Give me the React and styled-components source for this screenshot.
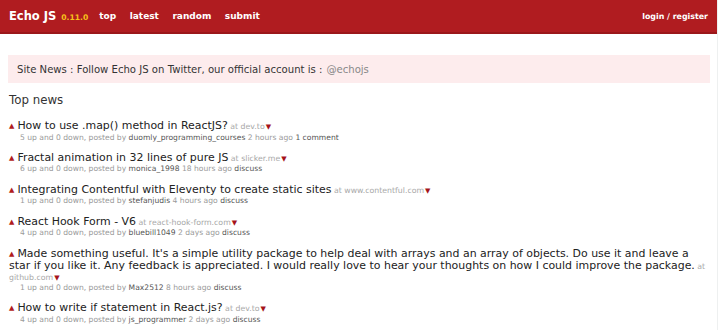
import React from "react";
import styled, { createGlobalStyle } from "styled-components";

const Global = createGlobalStyle`
  html, body { margin: 0; padding: 0; background: #fff; }
  body { font-family: "DejaVu Sans", Verdana, sans-serif; color: #333; }
  a { text-decoration: none; }
`;

const Page = styled.div`
  width: 718px;
  min-height: 330px;
  border-right: 1px solid #eef0f0;
  box-sizing: border-box;
`;

const Header = styled.header`
  height: 32px;
  background: #b01c20;
  border-bottom: 2px solid #9b171a;
  display: flex;
  align-items: center;
  padding: 0 9px 0 9px;
  color: #fff;
`;

const Logo = styled.a`
  font-size: 11.5px;
  font-weight: bold;
  color: #fff;
  margin-right: 5px;
`;

const Version = styled.span`
  font-size: 7.6px;
  font-weight: bold;
  color: #f7c21a;
  margin-right: 11px;
  padding-top: 2px;
`;

const Nav = styled.nav`
  display: flex;
  gap: 13.5px;
  flex: 1;
`;

const NavLink = styled.a`
  font-size: 9px;
  font-weight: bold;
  color: #fff;
`;

const Account = styled.a`
  font-size: 7.9px;
  font-weight: bold;
  color: #fff;
`;

const Main = styled.main`
  padding: 21px 7px 0 8px;
`;

const NewsBox = styled.div`
  background: #fdeced;
  height: 28px;
  display: flex;
  align-items: center;
  padding-left: 9px;
  font-size: 10.1px;
  color: #333;
`;

const Handle = styled.a`
  color: #888;
  margin-left: 4px;
`;

const Heading = styled.h2`
  font-size: 11.8px;
  line-height: 14px;
  font-weight: normal;
  color: #333;
  margin: 10px 0 13px 1px;
`;

const List = styled.div`
  display: flex;
  flex-direction: column;
  gap: 9.4px;
`;

const Article = styled.article`
  padding-left: 1px;
`;

const TitleLine = styled.div`
  font-size: 7.8px;
  line-height: 10.5px;
  color: #a8a8a8;
`;

const Up = styled.span`
  color: #b01c20;
  font-size: 7px;
  margin-right: 3px;
  vertical-align: 1px;
`;

const Title = styled.a`
  font-size: 10.95px;
  line-height: 12px;
  color: #222;
`;

const Domain = styled.span`
  color: #a8a8a8;
`;

const Down = styled.span`
  color: #a5141a;
  font-size: 7px;
  margin-left: 1px;
`;

const Meta = styled.div`
  font-size: 7.6px;
  line-height: 10px;
  color: #9a9a9a;
  margin-left: 11px;
`;

const MetaLink = styled.a`
  color: #555;
`;

const articles = [
  { title: "How to use .map() method in ReactJS?", domain: "dev.to", up: 5, user: "duomly_programming_courses", ago: "2 hours ago", c: "1 comment" },
  { title: "Fractal animation in 32 lines of pure JS", domain: "slicker.me", up: 6, user: "monica_1998", ago: "18 hours ago", c: "discuss" },
  { title: "Integrating Contentful with Eleventy to create static sites", domain: "www.contentful.com", up: 1, user: "stefanjudis", ago: "4 hours ago", c: "discuss" },
  { title: "React Hook Form - V6", domain: "react-hook-form.com", up: 4, user: "bluebill1049", ago: "2 days ago", c: "discuss" },
  { title: "Made something useful. It's a simple utility package to help deal with arrays and an array of objects. Do use it and leave a star if you like it. Any feedback is appreciated. I would really love to hear your thoughts on how I could improve the package.", domain: "github.com", up: 1, user: "Max2512", ago: "8 hours ago", c: "discuss" },
  { title: "How to write if statement in React.js?", domain: "dev.to", up: 4, user: "js_programmer", ago: "2 days ago", c: "discuss" },
];

export default function App() {
  return (
    <Page>
      <Global />
      <Header>
        <Logo href="#">Echo JS</Logo>
        <Version>0.11.0</Version>
        <Nav>
          <NavLink href="#">top</NavLink>
          <NavLink href="#">latest</NavLink>
          <NavLink href="#">random</NavLink>
          <NavLink href="#">submit</NavLink>
        </Nav>
        <Account href="#">login / register</Account>
      </Header>
      <Main>
        <NewsBox>
          Site News : Follow Echo JS on Twitter, our official account is :
          <Handle href="#">@echojs</Handle>
        </NewsBox>
        <Heading>Top news</Heading>
        <List>
          {articles.map((a, i) => (
            <Article key={i}>
              <TitleLine>
                <Up>▲</Up>
                <Title href="#">{a.title}</Title>{" "}
                <Domain>at {a.domain}</Domain>
                <Down>▼</Down>
              </TitleLine>
              <Meta>
                {a.up} up and 0 down, posted by <MetaLink href="#">{a.user}</MetaLink> {a.ago}{" "}
                <MetaLink href="#">{a.c}</MetaLink>
              </Meta>
            </Article>
          ))}
        </List>
      </Main>
    </Page>
  );
}
